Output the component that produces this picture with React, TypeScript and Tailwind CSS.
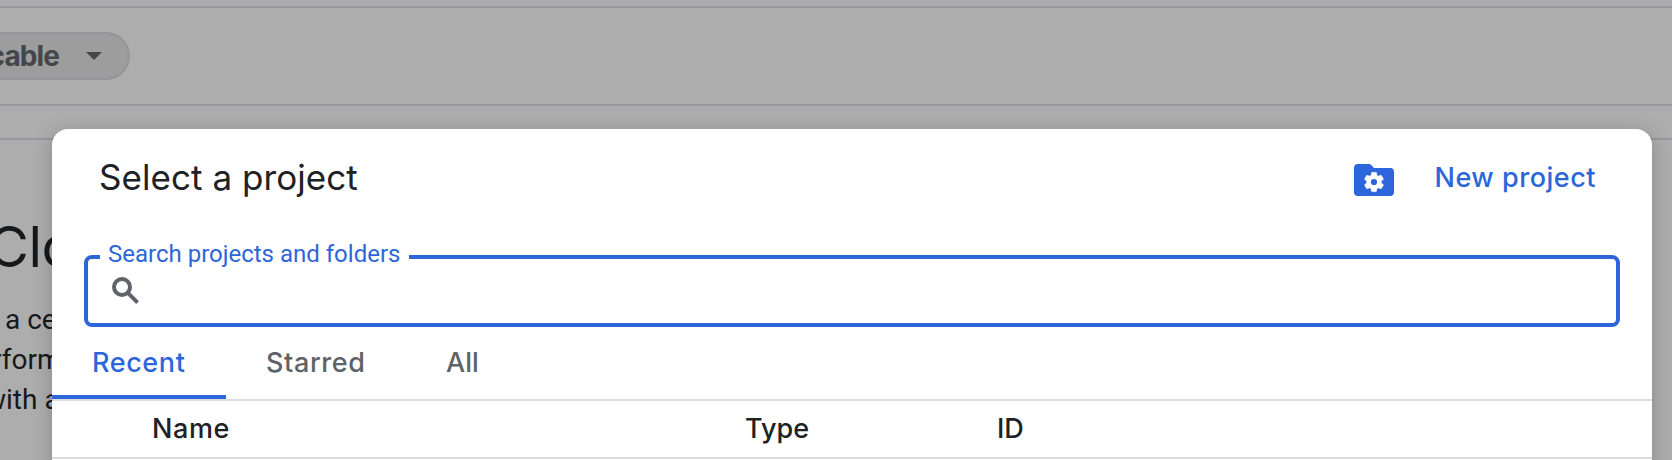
const GEAR =
  "M19.14 12.94c.04-.3.06-.61.06-.94 0-.32-.02-.64-.07-.94l2.03-1.58c.18-.14.23-.41.12-.61l-1.92-3.32c-.12-.22-.37-.29-.59-.22l-2.39.96c-.5-.38-1.03-.7-1.62-.94l-.36-2.54c-.04-.24-.24-.41-.48-.41h-3.84c-.24 0-.43.17-.47.41l-.36 2.54c-.59.24-1.13.57-1.62.94l-2.39-.96c-.22-.08-.47 0-.59.22L2.74 8.87c-.12.21-.08.47.12.61l2.03 1.58c-.05.3-.09.63-.09.94s.02.64.07.94l-2.03 1.58c-.18.14-.23.41-.12.61l1.92 3.32c.12.22.37.29.59.22l2.39-.96c.5.38 1.03.7 1.62.94l.36 2.54c.05.24.24.41.48.41h3.84c.24 0 .44-.17.47-.41l.36-2.54c.59-.24 1.13-.56 1.62-.94l2.39.96c.22.08.47 0 .59-.22l1.92-3.32c.12-.22.07-.47-.12-.61l-2.01-1.58z";

function FolderGearIcon() {
  return (
    <svg viewBox="0 0 24 24" className="size-12 shrink-0">
      <path
        d="M3.9 4h5.6c.5 0 .8.2 1.1.5L12 6h8.2c1 0 1.8.8 1.8 1.8v10.4c0 1-.8 1.8-1.8 1.8H3.8c-1 0-1.8-.8-1.8-1.8V5.9C2 4.8 2.8 4 3.9 4z"
        fill="#2c66da"
      />
      <path d={GEAR} fill="#fff" stroke="#fff" strokeWidth=".7" transform="translate(6 7) scale(.5)" />
      <circle cx="12" cy="13" r="1.55" fill="#2c66da" />
    </svg>
  );
}

function SearchIcon() {
  return (
    <svg viewBox="0 0 28 28" className="size-7" fill="none" stroke="#5f6368" strokeWidth="4">
      <circle cx="10" cy="10" r="8" />
      <path d="M15.6 15.6L25.6 25.6" />
    </svg>
  );
}

function Backdrop() {
  return (
    <div className="h-full w-full overflow-hidden bg-[#adadad]">
      <header className="mt-1.5 flex h-[100px] items-start border-y-2 border-[#98989d] pt-6">
        <div className="flex h-12 w-[130px] items-center rounded-r-full border-2 border-l-0 border-[#949499] bg-[#9d9d9d]">
          <span className="-ml-[14px] w-[73px] pb-px text-right text-[28px] leading-8 font-bold tracking-[-0.9px] text-[#43464a]">
            cable
          </span>
          <svg viewBox="0 0 16 8" className="ml-[27px] h-2 w-4 fill-[#43464a]">
            <path d="M0 0h16L8 8z" />
          </svg>
        </div>
      </header>
      <div className="h-[34px] border-b-2 border-[#98989d]" />
      <main className="text-[#17181a]">
        <h1 className="mt-[74px] -ml-[12px] text-[56px] leading-[66px] tracking-[-0.5px]">Clo</h1>
        <div className="mt-5 font-[Roboto,sans-serif] text-[28px] leading-10">
          <p className="ml-[5px]">a ce</p>
          <p className="-ml-2">rform</p>
          <p className="-ml-[15px]">with a</p>
        </div>
      </main>
    </div>
  );
}

function SearchField() {
  return (
    <fieldset className="mx-8 mt-[25px] h-[82px] shrink-0 rounded-lg border-4 border-[#2c66da] pl-3">
      <legend className="h-6 pr-[9px] pl-2 font-[Roboto,sans-serif] text-[24px] leading-[18px] text-[#2c66da]">
        Search projects and folders
      </legend>
      <div className="mt-2 ml-3">
        <SearchIcon />
      </div>
    </fieldset>
  );
}

function Dialog() {
  return (
    <section
      role="dialog"
      className="absolute top-[129px] left-[52px] flex h-[400px] w-[1600px] flex-col rounded-2xl bg-white shadow-[0_4px_20px_rgba(0,0,0,0.22)]"
    >
      <div className="flex h-[91px] items-start justify-between pr-14 pl-[47px]">
        <h2 className="mt-[26px] text-[35px] leading-[44px] tracking-[0.06px] text-[#202124]">Select a project</h2>
        <div className="mt-[27px] flex items-start">
          <FolderGearIcon />
          <button className="ml-[37px] h-11 text-[27px] leading-[44px] font-medium tracking-[0.52px] text-[#2c66da]">
            New project
          </button>
        </div>
      </div>
      <SearchField />
      <nav className="flex h-[74px] shrink-0 border-b-2 border-[#dadce0] text-[27px] leading-[72px] font-medium tracking-[0.6px] text-[#5f6368]">
        <button className="flex h-[72px] w-[174px] items-start border-b-4 border-[#2c66da] pl-10 text-[#2c66da]">
          Recent
        </button>
        <button className="flex h-[72px] w-[180px] items-start pl-10">Starred</button>
        <button className="flex h-[72px] items-start pl-10 tracking-normal">All</button>
      </nav>
      <div className="flex h-[58px] shrink-0 border-b-2 border-[#dadce0] pl-[100px] text-[27px] leading-[56px] font-medium text-[#202124]">
        <span className="w-[593px] tracking-[0.6px]">Name</span>
        <span className="w-[252px]">Type</span>
        <span>ID</span>
      </div>
    </section>
  );
}

export default function App() {
  return (
    <div className="relative h-[460px] w-full overflow-hidden font-[Inter,sans-serif]">
      <Backdrop />
      <Dialog />
    </div>
  );
}
